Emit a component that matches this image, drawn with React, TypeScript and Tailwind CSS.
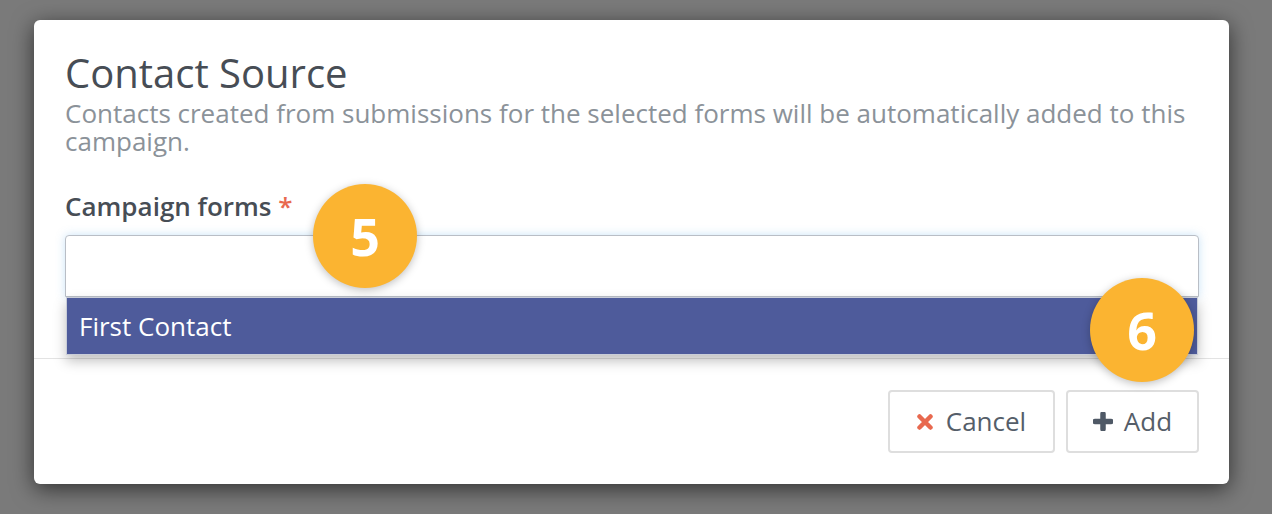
import React from "react";

export default function App() {
  return (
    <div className="min-h-[514px] w-full bg-[#7a7a7a] pt-[20px] font-['Open_Sans',sans-serif]">
      <div className="relative ml-[34px] w-[1195px] rounded-[6px] bg-white shadow-[0_5px_22px_rgba(0,0,0,0.6)]">
        <div className="pl-[31px] pr-[30px] pt-[31px] pb-[61px]">
          <h2 className="text-[40px] leading-[44px] text-[#474d55]">Contact Source</h2>
          <p className="mt-[4px] text-[26px] leading-[28px] text-[#8b9299]">
            Contacts created from submissions for the selected forms will be automatically added to this campaign.
          </p>
          <div className="mt-[37px] text-[26px] font-semibold leading-[28px] text-[#474d55]">
            Campaign forms <span className="text-[#e8694f]">*</span>
          </div>
          <div className="relative mt-[15px]">
            <div className="h-[62px] rounded-t-[4px] border border-[#b9bec6] bg-white shadow-[0_0_10px_rgba(102,175,233,0.35)]" />
            <div className="absolute left-[1px] right-[1px] top-[62px] z-10 h-[58px] border border-[#c9cdd8] bg-[#4e5b9b] pl-[12px] text-[26px] leading-[56px] text-white shadow-[0_6px_12px_rgba(0,0,0,0.25)]">
              First Contact
            </div>
          </div>
        </div>
        <div className="flex justify-end gap-[11px] border-t border-[#e3e3e3] pb-[31px] pr-[30px] pt-[31px]">
          <button className="flex h-[63px] w-[167px] items-center justify-center gap-[13px] rounded-[4px] border-2 border-[#dedede] bg-white text-[26px] text-[#555e69]">
            <svg width="16" height="16" viewBox="0 0 16 16">
              <path d="M2.5 2.5 L13.5 13.5 M13.5 2.5 L2.5 13.5" stroke="#e8694f" strokeWidth="4.5" strokeLinecap="round" />
            </svg>
            Cancel
          </button>
          <button className="flex h-[63px] w-[133px] items-center justify-center gap-[11px] rounded-[4px] border-2 border-[#dedede] bg-white text-[26px] text-[#555e69]">
            <svg width="20" height="19" viewBox="0 0 20 19">
              <path d="M10 2 V17 M2 9.5 H18" stroke="#4f5966" strokeWidth="5.5" strokeLinecap="round" />
            </svg>
            Add
          </button>
        </div>
        <div className="absolute left-[279px] top-[164px] z-20 flex h-[104px] w-[104px] items-center justify-center rounded-full bg-[#fbb431] text-[52px] font-bold text-white shadow-[0_2px_8px_rgba(0,0,0,0.25)]">
          5
        </div>
        <div className="absolute left-[1056px] top-[258px] z-20 flex h-[104px] w-[104px] items-center justify-center rounded-full bg-[#fbb431] text-[52px] font-bold text-white shadow-[0_2px_8px_rgba(0,0,0,0.25)]">
          6
        </div>
      </div>
    </div>
  );
}
